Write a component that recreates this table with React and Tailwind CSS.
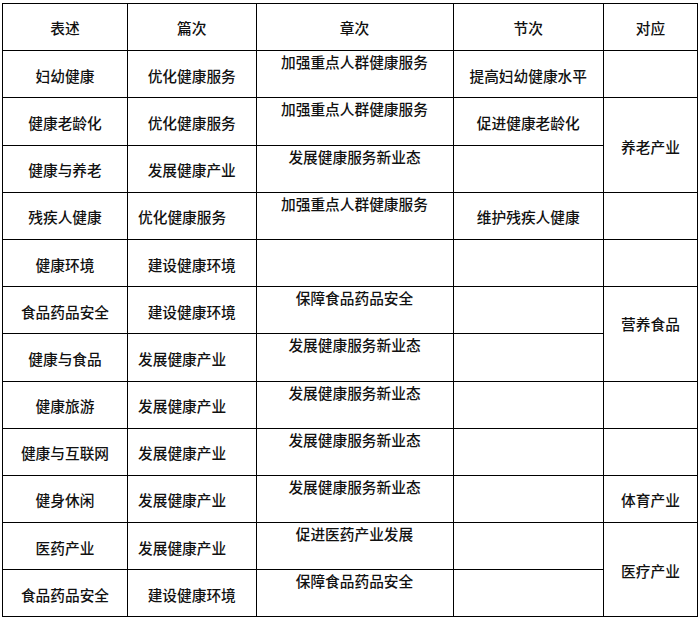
import React from "react";

const rows = [
  { a: "妇幼健康", b: "优化健康服务", bl: false, c: "加强重点人群健康服务", d: "提高妇幼健康水平" },
  { a: "健康老龄化", b: "优化健康服务", bl: false, c: "加强重点人群健康服务", d: "促进健康老龄化" },
  { a: "健康与养老", b: "发展健康产业", bl: false, c: "发展健康服务新业态", d: "" },
  { a: "残疾人健康", b: "优化健康服务", bl: true, c: "加强重点人群健康服务", d: "维护残疾人健康" },
  { a: "健康环境", b: "建设健康环境", bl: false, c: "", d: "" },
  { a: "食品药品安全", b: "建设健康环境", bl: false, c: "保障食品药品安全", d: "" },
  { a: "健康与食品", b: "发展健康产业", bl: true, c: "发展健康服务新业态", d: "" },
  { a: "健康旅游", b: "发展健康产业", bl: true, c: "发展健康服务新业态", d: "" },
  { a: "健康与互联网", b: "发展健康产业", bl: true, c: "发展健康服务新业态", d: "" },
  { a: "健身休闲", b: "发展健康产业", bl: true, c: "发展健康服务新业态", d: "" },
  { a: "医药产业", b: "发展健康产业", bl: true, c: "促进医药产业发展", d: "" },
  { a: "食品药品安全", b: "建设健康环境", bl: false, c: "保障食品药品安全", d: "" },
];

const eCells = {
  0: { t: "", s: 1 },
  1: { t: "养老产业", s: 2 },
  3: { t: "", s: 1 },
  4: { t: "", s: 1 },
  5: { t: "营养食品", s: 2, up: true },
  7: { t: "", s: 1 },
  8: { t: "", s: 1 },
  9: { t: "体育产业", s: 1 },
  10: { t: "医疗产业", s: 2 },
};

const td = "border border-black p-0 pt-[3px] text-center align-middle";

export default function App() {
  return (
    <div
      className="w-[700px] h-[621px] bg-white pt-[3px] pl-[2px]"
      style={{ fontFamily: '"Noto Sans CJK SC", "Noto Sans", sans-serif' }}
    >
      <table className="table-fixed border-collapse w-[695px] text-[14.7px] leading-[20px] font-medium text-[#111]">
        <colgroup>
          <col className="w-[125px]" />
          <col className="w-[128.5px]" />
          <col className="w-[197px]" />
          <col className="w-[150.5px]" />
          <col className="w-[94px]" />
        </colgroup>
        <tbody>
          <tr className="h-[47.2px]">
            <td className="border border-black p-0 pt-[2px] text-center align-middle">表述</td>
            <td className="border border-black p-0 pt-[2px] text-center align-middle">篇次</td>
            <td className="border border-black p-0 pt-[2px] text-center align-middle">章次</td>
            <td className="border border-black p-0 pt-[2px] text-center align-middle">节次</td>
            <td className="border border-black p-0 pt-[2px] text-center align-middle">对应</td>
          </tr>
          {rows.map((r, i) => {
            const e = eCells[i];
            return (
              <tr key={i} className="h-[47.2px]">
                <td className={td}>{r.a}</td>
                <td className={r.bl ? "border border-black p-0 pt-[3px] pl-[10px] text-left align-middle" : td}>{r.b}</td>
                <td className="border border-black p-0 pt-[1px] text-center align-top">{r.c}</td>
                <td className={td}>{r.d}</td>
                {e && (
                  <td rowSpan={e.s} className={e.up ? "border border-black p-0 pb-[20px] text-center align-middle" : td}>
                    {e.t}
                  </td>
                )}
              </tr>
            );
          })}
        </tbody>
      </table>
    </div>
  );
}
